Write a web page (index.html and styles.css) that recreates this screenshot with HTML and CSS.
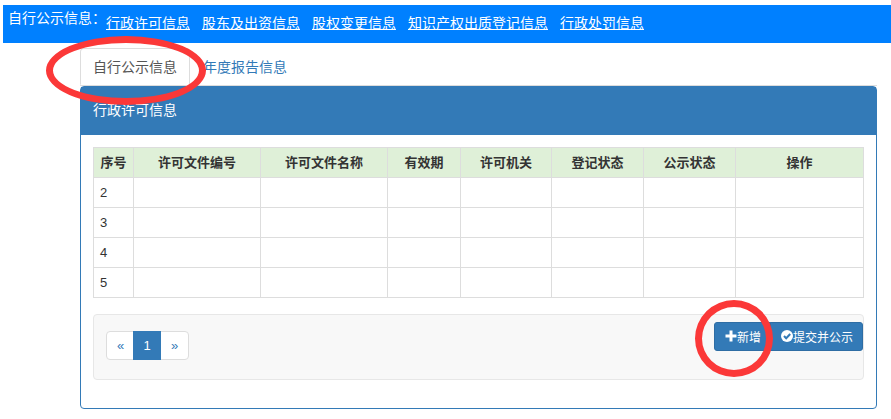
FILE: index.html
```html
<!DOCTYPE html>
<html lang="zh-CN">
<head>
    <meta charset="UTF-8">
    <meta name="viewport" content="width=device-width, initial-scale=1.0">
    <title>自行公示信息</title>
    <link rel="stylesheet" href="styles.css">
</head>
<body>
    <nav class="topbar">
        <span class="topbar-label">自行公示信息：</span>
        <div class="topbar-links">
            <a href="#">行政许可信息</a>
            <a href="#">股东及出资信息</a>
            <a href="#">股权变更信息</a>
            <a href="#">知识产权出质登记信息</a>
            <a href="#">行政处罚信息</a>
        </div>
    </nav>

    <main class="container">
        <div class="tabs">
            <div class="tab-item">
                <a class="tab active" href="#">自行公示信息</a>
                <span class="ring ring-tab"></span>
            </div>
            <a class="tab" href="#">年度报告信息</a>
        </div>

        <section class="panel">
            <div class="panel-heading">行政许可信息</div>
            <div class="panel-body">
                <table class="table">
                    <colgroup>
                        <col class="col-no">
                        <col class="col-file">
                        <col class="col-file">
                        <col class="col-term">
                        <col class="col-office">
                        <col class="col-state">
                        <col class="col-state">
                        <col class="col-action">
                    </colgroup>
                    <thead>
                        <tr>
                            <th>序号</th>
                            <th>许可文件编号</th>
                            <th>许可文件名称</th>
                            <th>有效期</th>
                            <th>许可机关</th>
                            <th>登记状态</th>
                            <th>公示状态</th>
                            <th>操作</th>
                        </tr>
                    </thead>
                    <tbody>
                        <tr><td>2</td><td></td><td></td><td></td><td></td><td></td><td></td><td></td></tr>
                        <tr><td>3</td><td></td><td></td><td></td><td></td><td></td><td></td><td></td></tr>
                        <tr><td>4</td><td></td><td></td><td></td><td></td><td></td><td></td><td></td></tr>
                        <tr><td>5</td><td></td><td></td><td></td><td></td><td></td><td></td><td></td></tr>
                    </tbody>
                </table>

                <div class="toolbar">
                    <div class="pagination">
                        <a href="#">«</a>
                        <a class="active" href="#">1</a>
                        <a href="#">»</a>
                    </div>
                    <div class="btn-group">
                        <button class="btn" type="button">
                            <svg class="icon" viewBox="0 0 12 12"><path d="M4.5 0.5h3v4h4v3h-4v4h-3v-4h-4v-3h4z"/></svg>新增
                        </button>
                        <button class="btn" type="button">
                            <svg class="icon" viewBox="0 0 12 12"><circle cx="6" cy="6" r="6"/><path class="tick" d="M3 6l2.2 2.3L9.2 4"/></svg>提交并公示
                        </button>
                        <span class="ring ring-add"></span>
                    </div>
                </div>
            </div>
        </section>
    </main>
</body>
</html>
```

FILE: styles.css
```css
* {
    box-sizing: border-box;
}

body {
    margin: 5px 0 0 3px;
    background-color: #fff;
    color: #333;
    font-family: "Liberation Sans", "Noto Sans CJK SC", sans-serif;
    font-size: 14px;
    line-height: 20px;
}

a {
    color: #337ab7;
    text-decoration: none;
}

.topbar {
    display: flex;
    height: 38px;
    padding: 3px 5px;
    background-color: #0080ff;
    color: #fff;
}

.topbar-links {
    display: flex;
    gap: 12px;
    padding-top: 5px;
}

.topbar-links a {
    color: #fff;
    text-decoration: underline;
}

.container {
    margin: 5px 14px 0 77px;
}

/* Tabs */
.tabs {
    display: flex;
    border-bottom: 1px solid #ddd;
}

.tab-item {
    position: relative;
    margin-bottom: -1px;
}

.tab {
    display: block;
    padding: 8px 12px 7px;
    border: 1px solid transparent;
    border-radius: 4px 4px 0 0;
}

.tab.active {
    border-color: #ddd;
    border-bottom-color: #fff;
    background-color: #fff;
    color: #555;
}

/* Panel */
.panel {
    border: 1px solid #337ab7;
    border-radius: 4px;
}

.panel-heading {
    padding: 13px 12px 15px;
    background-color: #337ab7;
    color: #fff;
}

.panel-body {
    padding: 12px 12px 28px;
}

.table {
    width: 100%;
    table-layout: fixed;
    border-collapse: collapse;
    font-size: 13px;
}

.table th,
.table td {
    height: 30px;
    padding: 0 6px;
    border: 1px solid #ddd;
    text-align: left;
}

.table th {
    padding: 0;
    background-color: #dff0d8;
    text-align: center;
}

.col-no {
    width: 40px;
}

.col-file {
    width: 127px;
}

.col-term {
    width: 73px;
}

.col-office {
    width: 91px;
}

.col-state {
    width: 92px;
}

.col-action {
    width: auto;
}

/* Paging and buttons under the table */
.toolbar {
    display: flex;
    justify-content: space-between;
    align-items: flex-start;
    height: 66px;
    margin-top: 16px;
    padding: 7px 0 0 12px;
    border: 1px solid #e7e7e7;
    border-radius: 4px;
    background-color: #f8f8f8;
}

.pagination {
    display: flex;
    margin-top: 9px;
    border: 1px solid #ddd;
    border-radius: 4px;
    background-color: #fff;
    font-size: 13px;
    line-height: 27px;
    text-align: center;
}

.pagination a {
    width: 27px;
}

.pagination .active {
    width: 28px;
    margin: -1px 0 -1px -1px;
    padding: 1px 0;
    background-color: #337ab7;
    color: #fff;
}

.btn-group {
    display: flex;
    position: relative;
}

.btn {
    display: flex;
    align-items: center;
    height: 29px;
    padding: 0 9px 0 10px;
    border: 1px solid #2e6da4;
    border-radius: 3px 0 0 3px;
    background-color: #337ab7;
    color: #fff;
    font-family: inherit;
    font-size: 12px;
    cursor: pointer;
}

.btn + .btn {
    margin-left: -1px;
    border-radius: 0 3px 3px 0;
}

.icon {
    width: 12px;
    height: 12px;
    margin-bottom: 2px;
    fill: #fff;
}

.tick {
    fill: none;
    stroke: #337ab7;
    stroke-width: 2;
}

/* Red marker rings */
.ring {
    position: absolute;
    border: 7px solid #fb3838;
    border-radius: 50%;
    pointer-events: none;
}

.ring-tab {
    top: -12px;
    left: -34px;
    width: 160px;
    height: 69px;
}

.ring-add {
    top: -22px;
    left: -19px;
    width: 78px;
    height: 77px;
}
```
